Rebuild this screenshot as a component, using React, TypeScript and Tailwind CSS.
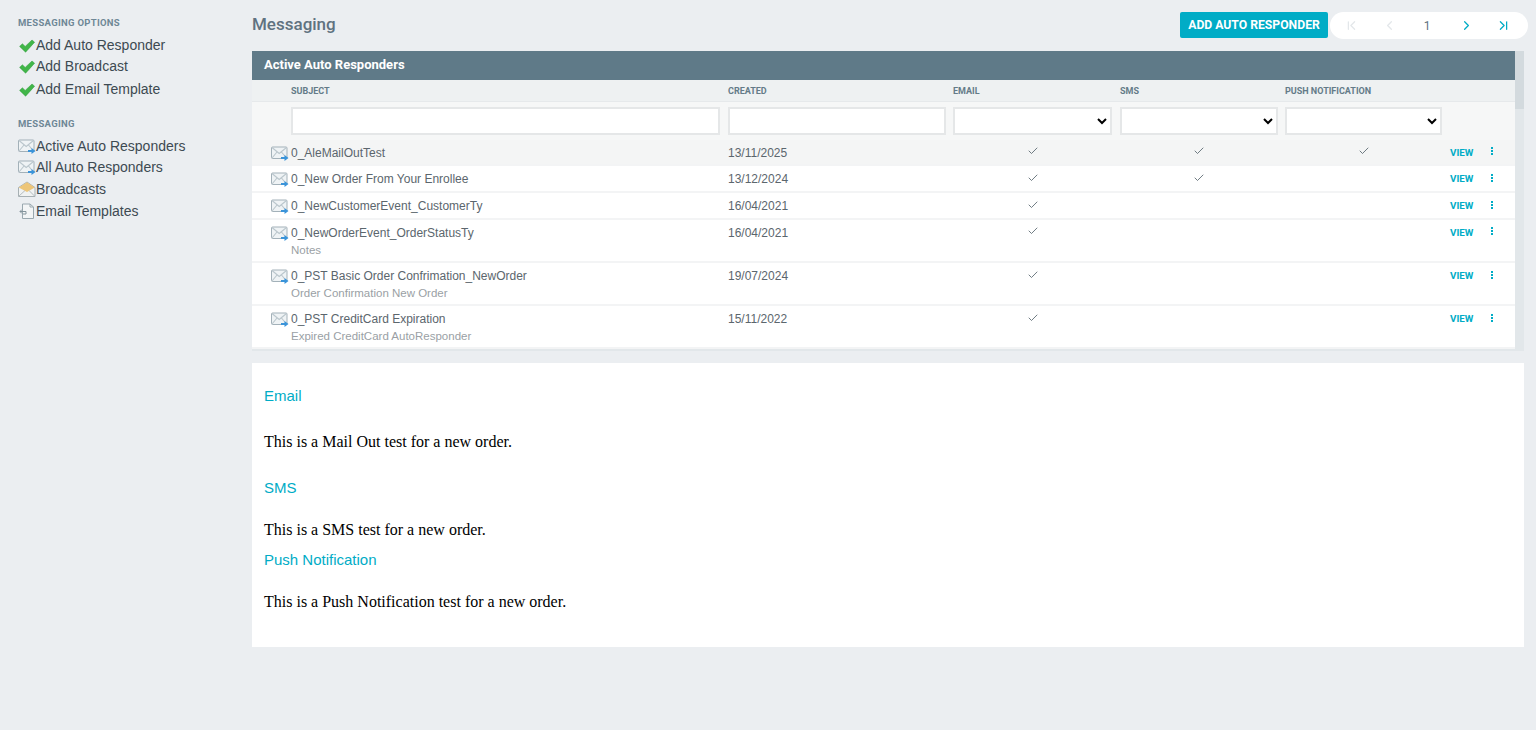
import { ChevronLeft, ChevronRight, ChevronFirst, ChevronLast, Check } from 'lucide-react';

function GreenCheck() {
  return (
    <svg width="16" height="14" viewBox="0 0 16 14" className="shrink-0 mt-[2px]">
      <path d="M0.6 7.4 L3.4 4.8 L6.2 7.4 L13 1 L15.6 3.2 L6.6 13.2 Z" fill="#41b649" stroke="#2f9a3a" strokeWidth="0.5" />
    </svg>
  );
}

function MailArrow() {
  return (
    <svg width="18" height="17" viewBox="0 0 18 17" className="shrink-0">
      <rect x="0.5" y="2" width="15.5" height="11.5" rx="1" fill="#eff3f5" stroke="#a3b1b9" />
      <path d="M1 2.5 L8.2 8.5 L15.5 2.5 M1 13 L6 7 M15.5 13 L10.5 7" fill="none" stroke="#bac6cc" strokeWidth="1.1" />
      <path d="M10 12 H13.5 V10 L17.5 13 L13.5 16 V14 H10 Z" fill="#3b94d9" />
    </svg>
  );
}

function MailOpen() {
  return (
    <svg width="18" height="17" viewBox="0 0 18 17" className="shrink-0">
      <path d="M0.5 6.5 L9 1 L17 6.5 V15.5 H0.5 Z" fill="#f0f2f2" stroke="#a7b0b4" />
      <path d="M0.8 6.5 L9 1.2 L16.8 6.5 L9 11 Z" fill="#edc578" />
      <path d="M1 15 L7 9.5 M16.5 15 L11 9.5" stroke="#b5bdc1" />
    </svg>
  );
}

function TemplateIcon() {
  return (
    <svg width="16" height="17" viewBox="0 0 16 17" className="shrink-0">
      <path d="M3.5 1 H11 L14.5 4 V15.5 H3.5 Z" fill="#f3f5f6" stroke="#9aa8af" />
      <path d="M11 1 V4 H14.5" fill="none" stroke="#9aa8af" />
      <path d="M1 8.5 H7 M3 6.5 L1 8.5 L3 10.5 M7 8.5 V11 H4" fill="none" stroke="#84949c" />
    </svg>
  );
}

function Dots() {
  return (
    <div className="flex flex-col gap-[1px] w-[2px]">
      <span className="h-[2px] w-[2px] bg-[#00acc6]" />
      <span className="h-[2px] w-[2px] bg-[#00acc6]" />
      <span className="h-[2px] w-[2px] bg-[#00acc6]" />
    </div>
  );
}

function SideItem({ icon, label, className }: { icon: React.ReactNode; label: string; className: string }) {
  return (
    <div className={`flex items-center text-[14px] leading-[16px] text-[#3d4a52] ${className}`}>
      <span className="w-[18px] flex justify-center">{icon}</span>
      <span>{label}</span>
    </div>
  );
}

const rows = [
  { subject: '0_AleMailOutTest', note: '', created: '13/11/2025', email: true, sms: true, push: true, h: 'h-[26px]', bg: 'bg-[#f4f5f5]', tick: 'pt-[5px]', dots: 'pt-[7px]' },
  { subject: '0_New Order From Your Enrollee', note: '', created: '13/12/2024', email: true, sms: true, push: false, h: 'h-[27px]', bg: 'bg-white', tick: 'pt-[6px]', dots: 'pt-[8px]' },
  { subject: '0_NewCustomerEvent_CustomerTy', note: '', created: '16/04/2021', email: true, sms: false, push: false, h: 'h-[27px]', bg: 'bg-white', tick: 'pt-[6px]', dots: 'pt-[8px]' },
  { subject: '0_NewOrderEvent_OrderStatusTy', note: 'Notes', created: '16/04/2021', email: true, sms: false, push: false, h: 'h-[43px]', bg: 'bg-white', tick: 'pt-[5px]', dots: 'pt-[7px]' },
  { subject: '0_PST Basic Order Confrimation_NewOrder', note: 'Order Confirmation New Order', created: '19/07/2024', email: true, sms: false, push: false, h: 'h-[43px]', bg: 'bg-white', tick: 'pt-[6px]', dots: 'pt-[8px]' },
  { subject: '0_PST CreditCard Expiration', note: 'Expired CreditCard AutoResponder', created: '15/11/2022', email: true, sms: false, push: false, h: 'h-[43px]', bg: 'bg-white', tick: 'pt-[6px]', dots: 'pt-[8px]' },
];

function Filter() {
  return (
    <select className="w-full h-[28px] bg-white border-2 border-[#e5e7e8] text-[12px]">
      <option></option>
    </select>
  );
}

function Tick({ on, w, pt }: { on: boolean; w: string; pt: string }) {
  return (
    <div className={`${w} ${pt} pr-[8px] flex justify-center`}>
      {on && <Check size={12} strokeWidth={1.6} className="text-[#4d5c64]" />}
    </div>
  );
}

export default function App() {
  return (
    <div className="h-[730px] w-[1536px] overflow-hidden bg-[#ebeef1] flex font-['Liberation_Sans',sans-serif]">
      <aside className="w-[252px] shrink-0 pl-[18px] pt-[17px]">
        <h3 className="font-['Roboto',sans-serif] text-[9.5px] leading-[12px] font-bold tracking-[0.3px] text-[#6e8796]">MESSAGING OPTIONS</h3>
        <SideItem icon={<GreenCheck />} label="Add Auto Responder" className="mt-[8px] h-[16px]" />
        <SideItem icon={<GreenCheck />} label="Add Broadcast" className="mt-[5px] h-[16px]" />
        <SideItem icon={<GreenCheck />} label="Add Email Template" className="mt-[7px] h-[16px]" />
        <h3 className="mt-[21px] font-['Roboto',sans-serif] text-[9.5px] leading-[12px] font-bold tracking-[0.3px] text-[#6e8796]">MESSAGING</h3>
        <SideItem icon={<MailArrow />} label="Active Auto Responders" className="mt-[8px] h-[16px]" />
        <SideItem icon={<MailArrow />} label="All Auto Responders" className="mt-[5px] h-[16px]" />
        <SideItem icon={<MailOpen />} label="Broadcasts" className="mt-[6px] h-[16px]" />
        <SideItem icon={<TemplateIcon />} label="Email Templates" className="mt-[6px] h-[16px]" />
      </aside>

      <main className="w-[1272px] shrink-0">
        <div className="h-[51px] flex items-center justify-between pb-[2px]">
          <h1 className="font-['Roboto',sans-serif] text-[17px] font-medium text-[#5f7280]">Messaging</h1>
          <div className="flex items-center gap-[2px] mr-[-4px] pt-[1px]">
            <button className="h-[26px] w-[148px] rounded-[2px] bg-[#00acc6] text-white font-['Roboto',sans-serif] text-[12.2px] font-bold">ADD AUTO RESPONDER</button>
            <div className="h-[27px] w-[198px] rounded-full bg-white flex items-center text-[#00acc6]">
              <span className="w-[43px] flex justify-center text-[#e3e7ea]"><ChevronFirst size={15} /></span>
              <span className="w-[32px] flex justify-center text-[#e3e7ea]"><ChevronLeft size={15} /></span>
              <span className="w-[44px] pt-[1px] text-center text-[12px] text-[#5f7280] font-['Roboto',sans-serif]">1</span>
              <span className="w-[34px] flex justify-center"><ChevronRight size={15} /></span>
              <span className="w-[40px] flex justify-center"><ChevronLast size={15} /></span>
            </div>
          </div>
        </div>

        <div className="h-[300px] flex bg-[#e2e7ea]">
          <div className="w-[1263px] flex flex-col">
            <div className="h-[29px] bg-[#5f7a88] text-white text-[13px] leading-[28px] font-bold font-['Roboto',sans-serif] pl-[12px] pb-[1px]">Active Auto Responders</div>
            <div className="h-[22px] bg-[#eef1f2] flex items-center pt-[3px] text-[#647b88] text-[9px] font-bold font-['Roboto',sans-serif] border-b border-[#e6e9eb]">
              <span className="ml-[39px] w-[437px]">SUBJECT</span>
              <span className="w-[225px]">CREATED</span>
              <span className="w-[167px]">EMAIL</span>
              <span className="w-[165px]">SMS</span>
              <span>PUSH NOTIFICATION</span>
            </div>
            <div className="h-[38px] bg-[#f6f7f7] flex items-center">
              <input className="ml-[39px] w-[429px] h-[28px] bg-white border-2 border-[#e5e7e8]" />
              <input className="ml-[8px] w-[218px] h-[28px] bg-white border-2 border-[#e5e7e8]" />
              <div className="ml-[7px] w-[159px]"><Filter /></div>
              <div className="ml-[8px] w-[158px]"><Filter /></div>
              <div className="ml-[7px] w-[157px]"><Filter /></div>
            </div>
            {rows.map((r) => (
              <div key={r.subject} className={`${r.h} ${r.bg} flex border-b-2 border-[#f3f4f5] text-[#5b666d]`}>
                <div className="w-[39px] pl-[19px] pt-[5px]"><MailArrow /></div>
                <div className="w-[437px] pt-[6px] leading-[14px] text-[12px]">
                  <div>{r.subject}</div>
                  {r.note && <div className="mt-[3px] text-[11.5px] text-[#9a9fa5]">{r.note}</div>}
                </div>
                <div className="w-[225px] pt-[6px] leading-[14px] text-[12px]">{r.created}</div>
                <Tick on={r.email} w="w-[167px]" pt={r.tick} />
                <Tick on={r.sms} w="w-[165px]" pt={r.tick} />
                <Tick on={r.push} w="w-[165px]" pt={r.tick} />
                <div className="w-[41px] pt-[7px] text-[9.8px] font-bold text-[#00acc6] font-['Roboto',sans-serif] leading-[12px]">VIEW</div>
                <div className={r.dots}><Dots /></div>
              </div>
            ))}
          </div>
          <div className="w-[9px]">
            <div className="h-[58px] bg-[#d3dade]" />
          </div>
        </div>

        <div className="mt-[12px] h-[284px] bg-white pl-[12px] pt-[24px]">
          <h4 className="text-[15px] leading-[18px] text-[#00acc6]">Email</h4>
          <p className="mt-[28px] font-['Liberation_Serif',serif] text-[16px] leading-[18px] text-black">This is a Mail Out test for a new order.</p>
          <h4 className="mt-[28px] text-[15px] leading-[18px] text-[#00acc6]">SMS</h4>
          <p className="mt-[24px] font-['Liberation_Serif',serif] text-[16px] leading-[18px] text-black">This is a SMS test for a new order.</p>
          <h4 className="mt-[12px] text-[15px] leading-[18px] text-[#00acc6]">Push Notification</h4>
          <p className="mt-[24px] font-['Liberation_Serif',serif] text-[16px] leading-[18px] text-black">This is a Push Notification test for a new order.</p>
        </div>
      </main>
    </div>
  );
}
